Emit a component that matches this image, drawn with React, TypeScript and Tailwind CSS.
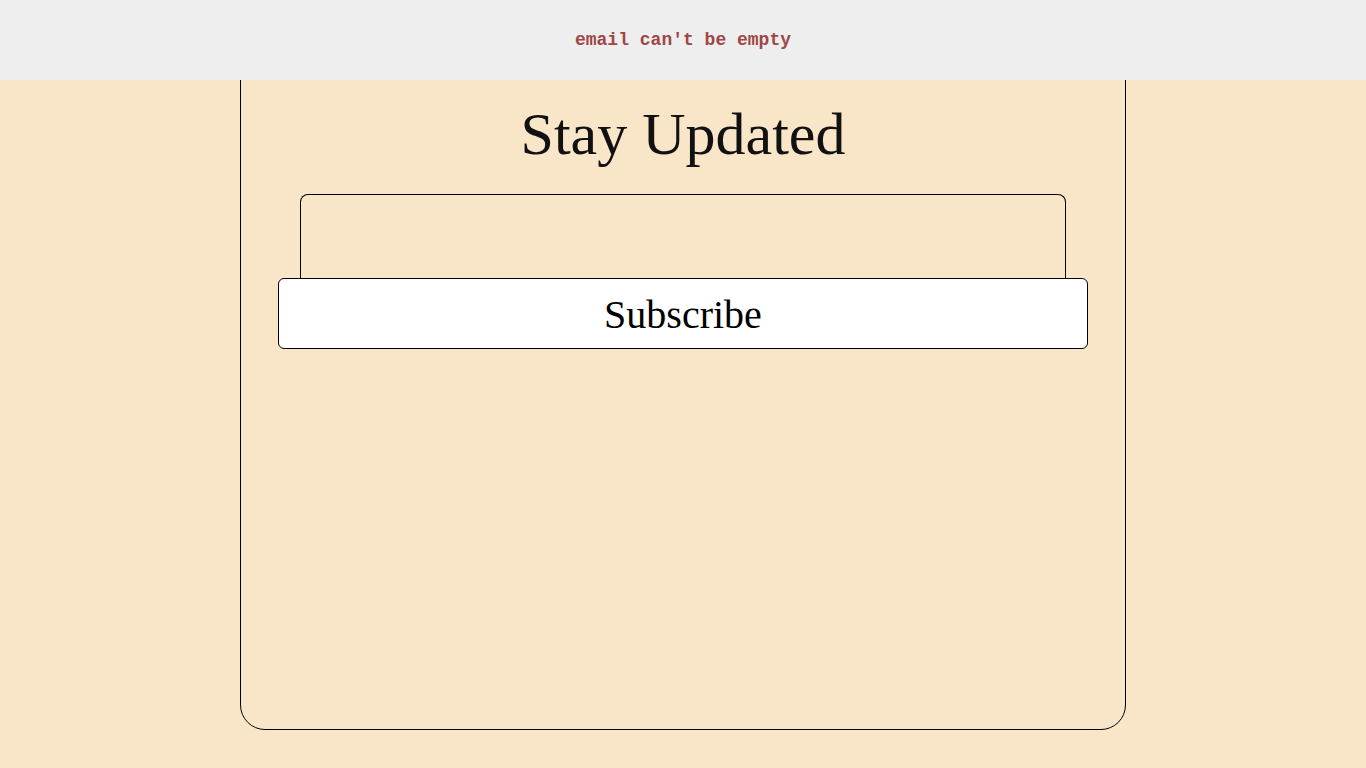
export default function App() {
  return (
    <div className="min-h-screen w-full bg-[#f9e6c9] pt-[30px] font-['Liberation_Serif',serif]">
      <div className="fixed top-0 left-0 z-10 flex h-[80px] w-full items-center justify-center bg-[#eeeeee]">
        <p className="font-['Liberation_Mono',monospace] text-[18px] font-bold text-[#a04646]">
          email can't be empty
        </p>
      </div>

      <div className="mx-auto flex h-[700px] w-[886px] flex-col items-center rounded-[25px] border border-black pt-[67px]">
        <h1 className="text-[60px] leading-[72px] text-[#111]">Stay Updated</h1>
        <form className="mt-[24px] flex w-[810px] flex-col" onSubmit={(e) => e.preventDefault()}>
          <input
            type="email"
            className="mx-[22px] h-[84px] rounded-t-[8px] border border-b-0 border-black bg-transparent px-4 text-[24px] focus:outline-none"
          />
          <button
            type="submit"
            className="h-[71px] rounded-[6px] border border-black bg-white pt-[3px] text-[40px] leading-none text-black"
          >
            Subscribe
          </button>
        </form>
      </div>
    </div>
  );
}
